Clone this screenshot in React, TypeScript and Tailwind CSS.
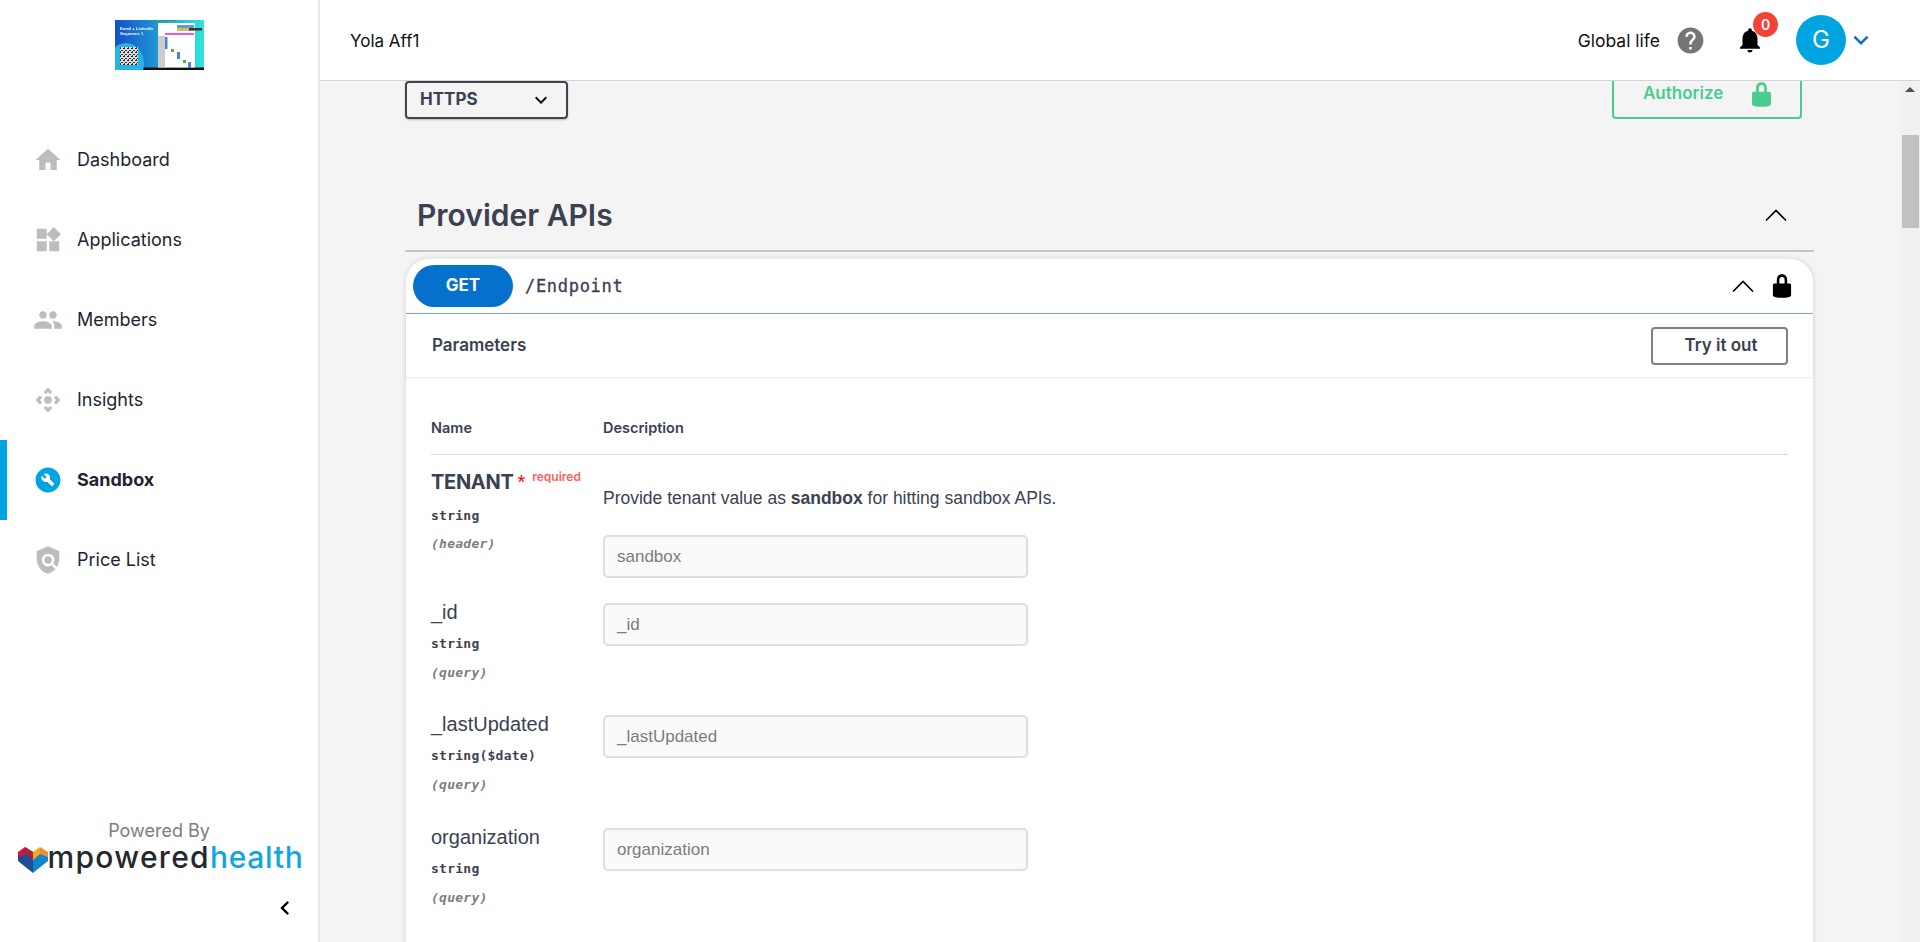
import { MdHome, MdWidgets, MdPeople, MdControlCamera, MdBuildCircle, MdPolicy, MdHelp, MdNotifications, MdKeyboardArrowDown, MdChevronLeft } from "react-icons/md";

const inter = "font-['Inter',sans-serif]";
const arial = "font-['Liberation_Sans',Arial,sans-serif]";
const mono = "font-['DejaVu_Sans_Mono',monospace]";

const navItems = [
  { label: "Dashboard", icon: MdHome },
  { label: "Applications", icon: MdWidgets },
  { label: "Members", icon: MdPeople },
  { label: "Insights", icon: MdControlCamera },
  { label: "Sandbox", icon: MdBuildCircle, active: true },
  { label: "Price List", icon: MdPolicy },
];

const params = [
  { name: "_id", type: "string", rowClass: "h-[112px]" },
  { name: "_lastUpdated", type: "string($date)", rowClass: "h-[113px]" },
  { name: "organization", type: "string", rowClass: "h-[112px]" },
];

function LockIcon({ className }: { className: string }) {
  return (
    <svg viewBox="0 0 20 20" className={className} fill="currentColor">
      <path d="M15.8 8H14V5.6C14 2.703 12.665 1 10 1 7.334 1 6 2.703 6 5.6V8H4c-.553 0-1 .646-1 1.199V17c0 .549.428 1.139.951 1.307l1.197.387C5.672 18.861 6.55 19 7.1 19h5.8c.549 0 1.428-.139 1.951-.307l1.196-.387c.524-.167.953-.757.953-1.306V9.199C17 8.646 16.352 8 15.8 8zM12 8H8V5.199C8 3.754 8.797 3 10 3c1.203 0 2 .754 2 2.199V8z" />
    </svg>
  );
}

function ArrowUp() {
  return (
    <svg viewBox="0 0 22 12" className="w-[22px] h-[12px]" fill="none" stroke="black" strokeWidth="1.6">
      <path d="M1 11.5 L11 1.5 L21 11.5" />
    </svg>
  );
}

function Thumbnail() {
  return (
    <svg viewBox="0 0 89 50" className="w-[89px] h-[50px] blur-[0.6px]">
      <defs>
        <linearGradient id="thumbBg" x1="0" y1="0" x2="1" y2="0">
          <stop offset="0" stopColor="#1550c8" />
          <stop offset="0.5" stopColor="#1f9ad6" />
          <stop offset="1" stopColor="#2fe6dc" />
        </linearGradient>
        <pattern id="qr" width="4" height="4" patternUnits="userSpaceOnUse">
          <rect width="4" height="4" fill="#ddd" />
          <rect width="2" height="1" fill="#222" />
          <rect x="2" y="2" width="2" height="1" fill="#333" />
          <rect x="1" y="3" width="1" height="1" fill="#444" />
        </pattern>
      </defs>
      <rect width="89" height="50" fill="url(#thumbBg)" />
      <rect y="47.5" width="89" height="2.5" fill="#111" />
      <rect x="39" y="0" width="22" height="1" fill="#2da84f" />
      <ellipse cx="11" cy="44" rx="18" ry="21" fill="#27b4e0" />
      <rect x="5" y="27" width="18" height="18" fill="url(#qr)" />
      <text x="5" y="9.5" fontSize="4.2" fontWeight="700" fill="#fff" fontFamily="Liberation Sans">Email + LinkedIn</text>
      <text x="5" y="14.5" fontSize="4.2" fontWeight="700" fill="#fff" fontFamily="Liberation Sans">Sequence 1</text>
      <rect x="43" y="3" width="37" height="44.5" fill="#fff" />
      <rect x="43" y="16" width="7" height="31" fill="#ccc" />
      <rect x="62" y="5" width="17" height="3" fill="#6f93d6" />
      <rect x="62" y="8" width="17" height="3" fill="#d6bb5c" />
      <rect x="74" y="8" width="13" height="2.5" fill="#333" />
      <rect x="50" y="13" width="29" height="2" fill="#ee55ee" />
      <rect x="50" y="17" width="2.5" height="12" fill="#4f7fd8" />
      <rect x="56" y="29" width="3" height="3" fill="#5fa84a" />
      <rect x="62" y="32" width="3" height="7" fill="#4f7fd8" />
      <rect x="68" y="40" width="3" height="3" fill="#5fa84a" />
      <rect x="73" y="42" width="3" height="6" fill="#4f7fd8" />
    </svg>
  );
}

function HeartLogo() {
  return (
    <svg viewBox="0 0 30 27" className="w-[30px] h-[27px] shrink-0">
      <path d="M0 6 L7 1 L15 6 L15 13 L7 16 L0 11 Z" fill="#d8123f" />
      <path d="M7 1 L15 6 L15 14 L7 9 Z" fill="#a3273a" />
      <path d="M15 6 L22 1 L22 9 L15 14 Z" fill="#f9a51a" />
      <path d="M22 1 L30 6 L30 11 L22 9 Z" fill="#e8913c" />
      <path d="M0 11 L8 8 L15 14 L15 27 L0 15 Z" fill="#1d4f91" />
      <path d="M30 11 L22 8 L15 14 L15 27 L30 15 Z" fill="#0f86cf" />
    </svg>
  );
}

function Sidebar() {
  return (
    <aside className={`w-[320px] shrink-0 h-full flex flex-col bg-white border-r-2 border-[#e6e6e6] ${inter}`}>
      <div className="h-[80px] flex items-center justify-center pt-[10px]">
        <Thumbnail />
      </div>
      <nav className="mt-[40px] flex flex-col">
        {navItems.map((item) => {
          const Icon = item.icon;
          return (
            <div key={item.label} className={`h-[80px] flex items-center ${item.active ? "border-l-[7px] border-[#00a4e0] pl-[26px]" : "pl-[33px]"}`}>
              <Icon className={`w-[30px] h-[30px] ${item.active ? "text-[#00a4e0]" : "text-[#bdbdbd]"}`} />
              <span className={`ml-[14px] pb-[2px] text-[18px] text-[#1f2430] ${item.active ? "font-bold" : ""}`}>{item.label}</span>
            </div>
          );
        })}
      </nav>
      <div className="mt-auto flex flex-col items-center pb-[24px]">
        <div className="text-[18px] text-[#7d7d7d] leading-[20px]">Powered By</div>
        <div className="flex items-center mt-[2px] pl-[3px] h-[32px]">
          <HeartLogo />
          <span className="text-[30px] font-medium leading-[30px] tracking-[1.3px] pb-[4px] text-[#25282d]">mpowered</span>
          <span className="text-[30px] font-medium leading-[30px] tracking-[0.7px] pb-[4px] text-[#12a5e4]">health</span>
        </div>
        <div className="self-end mr-[19px] mt-[19px] h-[24px]">
          <MdChevronLeft className="w-[28px] h-[28px] text-black" />
        </div>
      </div>
    </aside>
  );
}

function Header() {
  return (
    <header className={`h-[81px] shrink-0 bg-white border-b border-[#d4d4d4] flex items-center pl-[30px] pr-[44px] ${inter}`}>
      <span className="text-[17px] text-[#111] pt-[3px]">Yola Aff1</span>
      <div className="ml-auto flex items-center">
        <span className="text-[17.5px] text-[#111] pt-[2px]">Global life</span>
        <MdHelp className="w-[31px] h-[31px] ml-[15px] text-[#757575]" />
        <div className="relative ml-[29px] w-[30px] h-[30px]">
          <MdNotifications className="w-[30px] h-[30px] text-black" />
          <span className="absolute left-[18px] top-[-13px] w-[25px] h-[25px] rounded-full bg-[#f44336] text-white text-[14px] font-semibold flex items-center justify-center">0</span>
        </div>
        <div className="ml-[31px] w-[50px] h-[50px] rounded-full bg-[#00a4e0] text-white text-[24px] flex items-center justify-center">G</div>
        <MdKeyboardArrowDown className="w-[30px] h-[30px] text-[#0b6fc9]" />
      </div>
    </header>
  );
}

function NameCell({ name, type, loc }: { name: string; type: string; loc: string }) {
  return (
    <div className="w-[172px] shrink-0 -mt-[3px]">
      <div className={`${arial} text-[20px] leading-[24px] text-[#3b4151]`}>{name}</div>
      <div className={`${mono} font-bold text-[13px] tracking-[0.25px] leading-[20px] mt-[10px] text-[#3b4151]`}>{type}</div>
      <div className={`${mono} font-bold italic text-[13px] tracking-[0.25px] leading-[20px] mt-[9px] text-[#7d7d7d]`}>{loc}</div>
    </div>
  );
}

function ParamInput({ value }: { value: string }) {
  return (
    <div className={`${arial} w-[425px] h-[43px] rounded-[5px] border-2 border-[#dedede] bg-[#fafafa] flex items-center pl-[12px] text-[17px] text-[#7c7c7c]`}>
      {value}
    </div>
  );
}

function Card() {
  return (
    <section className="mt-[6px] bg-white rounded-t-[24px] border-x border-t border-[#e8e8e8] shadow-[0_0_4px_rgba(0,0,0,0.12)]">
      <div className="h-[55px] flex items-center pl-[7px] pr-[18px] border-b border-b-[#6ca9e6]">
        <div className={`${inter} w-[100px] h-[42px] rounded-[21px] bg-[#0671cd] text-white text-[17px] font-bold flex items-center justify-center`}>GET</div>
        <span className={`${mono} ml-[12px] pt-[1px] text-[17px] tracking-[0.7px] text-[#3b4151] [-webkit-text-stroke:0.3px_#3b4151]`}>/Endpoint</span>
        <div className="ml-auto flex items-center gap-[15px]">
          <ArrowUp />
          <LockIcon className="w-[26px] h-[26px] text-black" />
        </div>
      </div>
      <div className={`${inter} h-[63px] flex items-center justify-between pl-[26px] pr-[25px] shadow-[0_1px_2px_rgba(0,0,0,0.1)]`}>
        <span className="text-[17px] font-semibold text-[#3b4151]">Parameters</span>
        <div className="w-[137px] h-[38px] rounded-[4px] border-2 border-[#808080] text-[17px] font-semibold text-[#3b4151] flex items-center justify-center pl-[3px]">Try it out</div>
      </div>
      <div className="px-[25px] pt-[31px]">
        <div className={`${inter} flex h-[47px] border-b border-[#d9d9d9] items-start pt-[9px] text-[14.5px] font-semibold text-[#3b4151]`}>
          <span className="w-[172px]">Name</span>
          <span>Description</span>
        </div>
        <div className="flex h-[148px] pt-[14px]">
          <div className="w-[172px] shrink-0">
            <div className="flex items-start">
              <span className={`${inter} text-[20px] leading-[26px] font-bold tracking-[-0.3px] text-[#3b4151]`}>TENANT</span>
              <span className={`${arial} text-[#f00] text-[20px] leading-[26px] ml-[4px]`}>*</span>
              <span className={`${inter} text-[12px] leading-[16px] font-semibold text-[#ff6060] ml-[7px]`}>required</span>
            </div>
            <div className={`${mono} font-bold text-[13px] tracking-[0.25px] leading-[20px] mt-[11px] text-[#3b4151]`}>string</div>
            <div className={`${mono} font-bold italic text-[13px] tracking-[0.25px] leading-[20px] mt-[8px] text-[#7d7d7d]`}>(header)</div>
          </div>
          <div>
            <p className={`${arial} text-[17.5px] leading-[24px] mt-[17px] mb-[25px] text-[#3b4151]`}>
              Provide tenant value as <b>sandbox</b> for hitting sandbox APIs.
            </p>
            <ParamInput value="sandbox" />
          </div>
        </div>
        {params.map((p) => (
          <div key={p.name} className={`flex items-start ${p.rowClass}`}>
            <NameCell name={p.name} type={p.type} loc="(query)" />
            <ParamInput value={p.name} />
          </div>
        ))}
        <div className="h-[60px]" />
      </div>
    </section>
  );
}

function Scrollbar() {
  return (
    <div className="w-[20px] shrink-0 bg-[#f1f1f1] flex flex-col items-center">
      <div className="mt-[6px] w-0 h-0 border-x-[5px] border-x-transparent border-b-[5px] border-b-[#505050]" />
      <div className="mt-[43px] w-[17px] h-[93px] bg-[#c1c1c1]" />
    </div>
  );
}

export default function App() {
  return (
    <div className="w-full h-screen flex overflow-hidden bg-white">
      <Sidebar />
      <div className="flex-1 min-w-0 flex flex-col">
        <Header />
        <main className="flex-1 min-h-0 flex overflow-hidden bg-[#f4f4f4]">
          <div className="flex-1 min-w-0 pl-[85px] pr-[86px]">
            <div className="h-[38px] flex items-end justify-between pl-0 pr-[12px]">
              <div className={`${inter} w-[163px] h-[38px] rounded-[4px] border-2 border-[#41444e] shadow-[0_1px_2px_rgba(0,0,0,0.25)] flex items-center justify-between pl-[13px] pr-[17px] text-[17px] font-bold text-[#3b4151]`}>
                HTTPS
                <MdKeyboardArrowDown className="w-[24px] h-[24px] text-[#111] -mr-[4px]" />
              </div>
              <div className={`${inter} w-[190px] h-[50px] shrink-0 rounded-[4px] border-2 border-[#49cc90] flex items-center pl-[29px] gap-[25px] text-[17px] font-semibold text-[#49cc90]`}>
                Authorize
                <LockIcon className="w-[27px] h-[27px] text-[#49cc90]" />
              </div>
            </div>
            <div className="mt-[59px] h-[74px] pt-[2px] flex items-center justify-between pl-[12px] pr-[27px] border-b-2 border-[#c6c6c6]">
              <h2 className={`${inter} text-[30px] font-semibold text-[#3b4151]`}>Provider APIs</h2>
              <ArrowUp />
            </div>
            <Card />
          </div>
          <Scrollbar />
        </main>
      </div>
    </div>
  );
}
